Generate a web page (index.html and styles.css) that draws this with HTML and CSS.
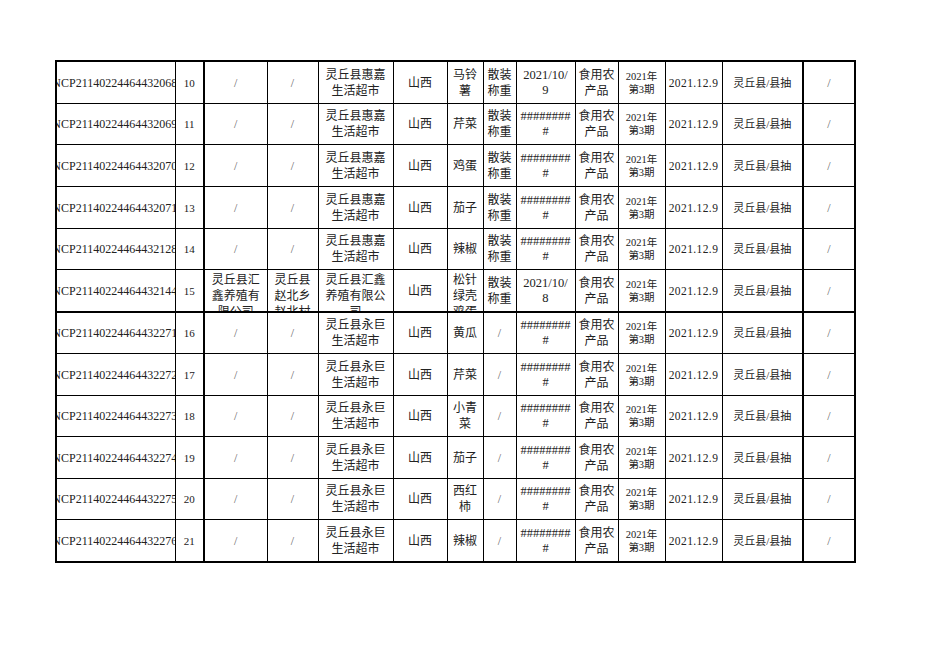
FILE: index.html
```html
<!DOCTYPE html>
<html lang="zh-CN">
<head>
<meta charset="utf-8">
<title>抽检数据</title>
<link rel="stylesheet" href="styles.css">
</head>
<body>
<table class="sheet">
<colgroup>
<col class="w-code"><col class="w-no"><col class="w-a"><col class="w-b"><col class="w-shop"><col class="w-prov"><col class="w-prod"><col class="w-pack"><col class="w-date"><col class="w-cat"><col class="w-issue"><col class="w-pub"><col class="w-src"><col class="w-last">
</colgroup>
<tbody>
<tr><td><div class="c code"><span>NCP21140224464432068</span></div></td><td class="thick-r"><div class="c num">10</div></td><td><div class="c sl">/</div></td><td><div class="c sl">/</div></td><td><div class="c">灵丘县惠嘉<br>生活超市</div></td><td><div class="c">山西</div></td><td><div class="c">马铃<br>薯</div></td><td><div class="c">散装<br>称重</div></td><td><div class="c dt">2021/10/<br>9</div></td><td><div class="c">食用农<br>产品</div></td><td><div class="c sm">2021年<br>第3期</div></td><td><div class="c pub">2021.12.9</div></td><td class="thick-r"><div class="c src">灵丘县/县抽</div></td><td><div class="c sl">/</div></td></tr>
<tr class="short"><td><div class="c code"><span>NCP21140224464432069</span></div></td><td class="thick-r"><div class="c num">11</div></td><td><div class="c sl">/</div></td><td><div class="c sl">/</div></td><td><div class="c">灵丘县惠嘉<br>生活超市</div></td><td><div class="c">山西</div></td><td><div class="c">芹菜</div></td><td><div class="c">散装<br>称重</div></td><td><div class="c dt">########<br>#</div></td><td><div class="c">食用农<br>产品</div></td><td><div class="c sm">2021年<br>第3期</div></td><td><div class="c pub">2021.12.9</div></td><td class="thick-r"><div class="c src">灵丘县/县抽</div></td><td><div class="c sl">/</div></td></tr>
<tr><td><div class="c code"><span>NCP21140224464432070</span></div></td><td class="thick-r"><div class="c num">12</div></td><td><div class="c sl">/</div></td><td><div class="c sl">/</div></td><td><div class="c">灵丘县惠嘉<br>生活超市</div></td><td><div class="c">山西</div></td><td><div class="c">鸡蛋</div></td><td><div class="c">散装<br>称重</div></td><td><div class="c dt">########<br>#</div></td><td><div class="c">食用农<br>产品</div></td><td><div class="c sm">2021年<br>第3期</div></td><td><div class="c pub">2021.12.9</div></td><td class="thick-r"><div class="c src">灵丘县/县抽</div></td><td><div class="c sl">/</div></td></tr>
<tr><td><div class="c code"><span>NCP21140224464432071</span></div></td><td class="thick-r"><div class="c num">13</div></td><td><div class="c sl">/</div></td><td><div class="c sl">/</div></td><td><div class="c">灵丘县惠嘉<br>生活超市</div></td><td><div class="c">山西</div></td><td><div class="c">茄子</div></td><td><div class="c">散装<br>称重</div></td><td><div class="c dt">########<br>#</div></td><td><div class="c">食用农<br>产品</div></td><td><div class="c sm">2021年<br>第3期</div></td><td><div class="c pub">2021.12.9</div></td><td class="thick-r"><div class="c src">灵丘县/县抽</div></td><td><div class="c sl">/</div></td></tr>
<tr class="short"><td><div class="c code"><span>NCP21140224464432128</span></div></td><td class="thick-r"><div class="c num">14</div></td><td><div class="c sl">/</div></td><td><div class="c sl">/</div></td><td><div class="c">灵丘县惠嘉<br>生活超市</div></td><td><div class="c">山西</div></td><td><div class="c">辣椒</div></td><td><div class="c">散装<br>称重</div></td><td><div class="c dt">########<br>#</div></td><td><div class="c">食用农<br>产品</div></td><td><div class="c sm">2021年<br>第3期</div></td><td><div class="c pub">2021.12.9</div></td><td class="thick-r"><div class="c src">灵丘县/县抽</div></td><td><div class="c sl">/</div></td></tr>
<tr class="sep"><td><div class="c code"><span>NCP21140224464432144</span></div></td><td class="thick-r"><div class="c num">15</div></td><td><div class="c top">灵丘县汇<br>鑫养殖有<br>限公司</div></td><td><div class="c top">灵丘县<br>赵北乡<br>赵北村</div></td><td><div class="c top">灵丘县汇鑫<br>养殖有限公<br>司</div></td><td><div class="c">山西</div></td><td><div class="c top">松针<br>绿壳<br>鸡蛋</div></td><td><div class="c">散装<br>称重</div></td><td><div class="c dt">2021/10/<br>8</div></td><td><div class="c">食用农<br>产品</div></td><td><div class="c sm">2021年<br>第3期</div></td><td><div class="c pub">2021.12.9</div></td><td class="thick-r"><div class="c src">灵丘县/县抽</div></td><td><div class="c sl">/</div></td></tr>
<tr class="short"><td><div class="c code"><span>NCP21140224464432271</span></div></td><td class="thick-r"><div class="c num">16</div></td><td><div class="c sl">/</div></td><td><div class="c sl">/</div></td><td><div class="c">灵丘县永巨<br>生活超市</div></td><td><div class="c">山西</div></td><td><div class="c">黄瓜</div></td><td><div class="c sl">/</div></td><td><div class="c dt">########<br>#</div></td><td><div class="c">食用农<br>产品</div></td><td><div class="c sm">2021年<br>第3期</div></td><td><div class="c pub">2021.12.9</div></td><td class="thick-r"><div class="c src">灵丘县/县抽</div></td><td><div class="c sl">/</div></td></tr>
<tr><td><div class="c code"><span>NCP21140224464432272</span></div></td><td class="thick-r"><div class="c num">17</div></td><td><div class="c sl">/</div></td><td><div class="c sl">/</div></td><td><div class="c">灵丘县永巨<br>生活超市</div></td><td><div class="c">山西</div></td><td><div class="c">芹菜</div></td><td><div class="c sl">/</div></td><td><div class="c dt">########<br>#</div></td><td><div class="c">食用农<br>产品</div></td><td><div class="c sm">2021年<br>第3期</div></td><td><div class="c pub">2021.12.9</div></td><td class="thick-r"><div class="c src">灵丘县/县抽</div></td><td><div class="c sl">/</div></td></tr>
<tr class="short"><td><div class="c code"><span>NCP21140224464432273</span></div></td><td class="thick-r"><div class="c num">18</div></td><td><div class="c sl">/</div></td><td><div class="c sl">/</div></td><td><div class="c">灵丘县永巨<br>生活超市</div></td><td><div class="c">山西</div></td><td><div class="c">小青<br>菜</div></td><td><div class="c sl">/</div></td><td><div class="c dt">########<br>#</div></td><td><div class="c">食用农<br>产品</div></td><td><div class="c sm">2021年<br>第3期</div></td><td><div class="c pub">2021.12.9</div></td><td class="thick-r"><div class="c src">灵丘县/县抽</div></td><td><div class="c sl">/</div></td></tr>
<tr><td><div class="c code"><span>NCP21140224464432274</span></div></td><td class="thick-r"><div class="c num">19</div></td><td><div class="c sl">/</div></td><td><div class="c sl">/</div></td><td><div class="c">灵丘县永巨<br>生活超市</div></td><td><div class="c">山西</div></td><td><div class="c">茄子</div></td><td><div class="c sl">/</div></td><td><div class="c dt">########<br>#</div></td><td><div class="c">食用农<br>产品</div></td><td><div class="c sm">2021年<br>第3期</div></td><td><div class="c pub">2021.12.9</div></td><td class="thick-r"><div class="c src">灵丘县/县抽</div></td><td><div class="c sl">/</div></td></tr>
<tr class="short"><td><div class="c code"><span>NCP21140224464432275</span></div></td><td class="thick-r"><div class="c num">20</div></td><td><div class="c sl">/</div></td><td><div class="c sl">/</div></td><td><div class="c">灵丘县永巨<br>生活超市</div></td><td><div class="c">山西</div></td><td><div class="c">西红<br>柿</div></td><td><div class="c sl">/</div></td><td><div class="c dt">########<br>#</div></td><td><div class="c">食用农<br>产品</div></td><td><div class="c sm">2021年<br>第3期</div></td><td><div class="c pub">2021.12.9</div></td><td class="thick-r"><div class="c src">灵丘县/县抽</div></td><td><div class="c sl">/</div></td></tr>
<tr><td><div class="c code"><span>NCP21140224464432276</span></div></td><td class="thick-r"><div class="c num">21</div></td><td><div class="c sl">/</div></td><td><div class="c sl">/</div></td><td><div class="c">灵丘县永巨<br>生活超市</div></td><td><div class="c">山西</div></td><td><div class="c">辣椒</div></td><td><div class="c sl">/</div></td><td><div class="c dt">########<br>#</div></td><td><div class="c">食用农<br>产品</div></td><td><div class="c sm">2021年<br>第3期</div></td><td><div class="c pub">2021.12.9</div></td><td class="thick-r"><div class="c src">灵丘县/县抽</div></td><td><div class="c sl">/</div></td></tr>
</tbody>
</table>
</body>
</html>
```

FILE: styles.css
```css
html, body {
  margin: 0;
  padding: 0;
  background: #fff;
}
body {
  font-family: "Liberation Serif", "Noto Sans CJK SC", serif;
  color: #222;
  padding: 60px 0 0 55px;
}
.sheet {
  border-collapse: collapse;
  table-layout: fixed;
  width: 801px;
  border: 2px solid #000;
}
.w-code { width: 119px; }
.w-no { width: 29px; }
.w-a { width: 63px; }
.w-b { width: 51px; }
.w-shop { width: 75px; }
.w-prov { width: 54px; }
.w-prod { width: 36px; }
.w-pack { width: 33px; }
.w-date { width: 59px; }
.w-cat { width: 43px; }
.w-issue { width: 47px; }
.w-pub { width: 57px; }
.w-src { width: 81px; }
.w-last { width: 52px; }
.sheet td {
  border: 1px solid #000;
  padding: 0;
  vertical-align: middle;
  text-align: center;
  overflow: hidden;
}
.sheet td.thick-r { border-right: 2px solid #000; }
.sheet tr.sep td { border-bottom: 2px solid #000; }
.c {
  height: 41px;
  display: flex;
  align-items: center;
  justify-content: center;
  overflow: hidden;
  font-size: 12px;
  line-height: 16px;
  font-weight: 400;
  text-align: center;
}
.short .c { height: 40px; }
.c.top {
  align-items: flex-start;
  padding-top: 2px;
  height: 39px;
}
.code {
  white-space: nowrap;
  font-size: 12px;
}
.code span { flex: none; margin-right: 2px; }
.num { font-size: 11px; }
.sl { color: #666; font-size: 12px; }
.dt { font-size: 12.5px; line-height: 15px; }
.sm { font-size: 10.5px; line-height: 13px; }
.pub { font-size: 11.5px; letter-spacing: 0.4px; white-space: nowrap; }
.src { font-size: 11px; white-space: nowrap; }
```
